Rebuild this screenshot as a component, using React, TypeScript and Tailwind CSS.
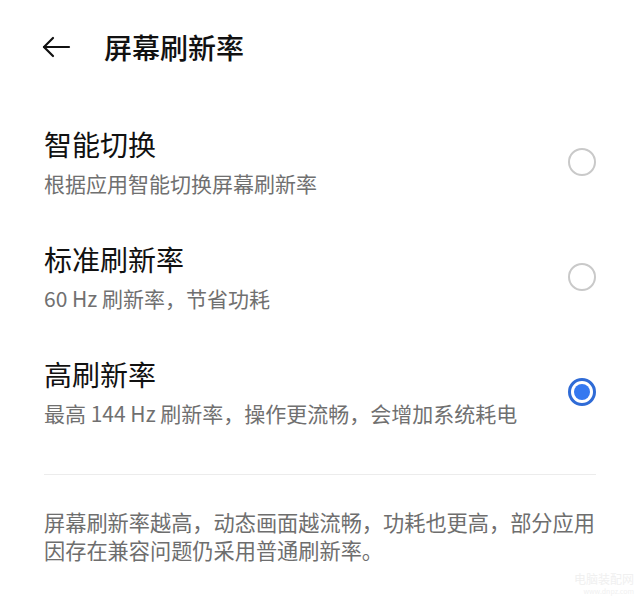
import React, { useState } from 'react';

const options = [
  { id: 'smart', title: '智能切换', desc: '根据应用智能切换屏幕刷新率' },
  { id: 'standard', title: '标准刷新率', desc: '60 Hz 刷新率，节省功耗' },
  { id: 'high', title: '高刷新率', desc: '最高 144 Hz 刷新率，操作更流畅，会增加系统耗电' },
];

const Radio = ({ checked }: { checked: boolean }) =>
  checked ? (
    <div className="w-[28px] h-[28px] rounded-full border-[3px] border-[#2f6bd6] flex items-center justify-center">
      <div className="w-[16px] h-[16px] rounded-full bg-[#3478f0]" />
    </div>
  ) : (
    <div className="w-[28px] h-[28px] rounded-full border-2 border-[#c9c9c9]" />
  );

export default function App() {
  const [selected, setSelected] = useState('high');

  return (
    <div
      className="w-[640px] h-[597px] bg-white flex flex-col text-[#111] overflow-hidden"
      style={{ fontFamily: '"Noto Sans CJK SC", "Noto Sans", sans-serif' }}
    >
      {/* Header */}
      <div className="h-[94px] flex items-center pl-[40px]">
        <svg width="32" height="24" viewBox="0 0 32 24" fill="none" stroke="#111" strokeWidth="2.2" strokeLinecap="round" strokeLinejoin="round">
          <path d="M29 12H4" />
          <path d="M13 3L4 12L13 21" />
        </svg>
        <span className="ml-[32px] text-[28px] font-medium">屏幕刷新率</span>
      </div>

      {/* Options */}
      <div className="flex flex-col gap-[43px] px-[44px] pt-[32px]">
        {options.map((o) => (
          <button
            key={o.id}
            onClick={() => setSelected(o.id)}
            className="flex items-center justify-between text-left"
          >
            <div className="flex flex-col gap-[6px]">
              <span className="text-[28px] leading-[36px]">{o.title}</span>
              <span className="text-[21px] leading-[30px] text-[#707070]">{o.desc}</span>
            </div>
            <Radio checked={selected === o.id} />
          </button>
        ))}
      </div>

      <div className="mx-[44px] mt-[46px] h-px bg-[#ececec]" />

      <p className="ml-[44px] mt-[33px] whitespace-nowrap text-[21.2px] leading-[28px] text-[#6e6e6e]">
        屏幕刷新率越高，动态画面越流畅，功耗也更高，部分应用
        <br />
        因存在兼容问题仍采用普通刷新率。
      </p>

      <div className="mt-auto self-end pr-[6px] pb-[2px] flex flex-col items-end gap-[2px] text-[#f0f0f0]">
        <span className="text-[12px] leading-[13px]">电脑装配网</span>
        <span className="text-[7px] leading-[8px]">www.dnpz.com</span>
      </div>
    </div>
  );
}
